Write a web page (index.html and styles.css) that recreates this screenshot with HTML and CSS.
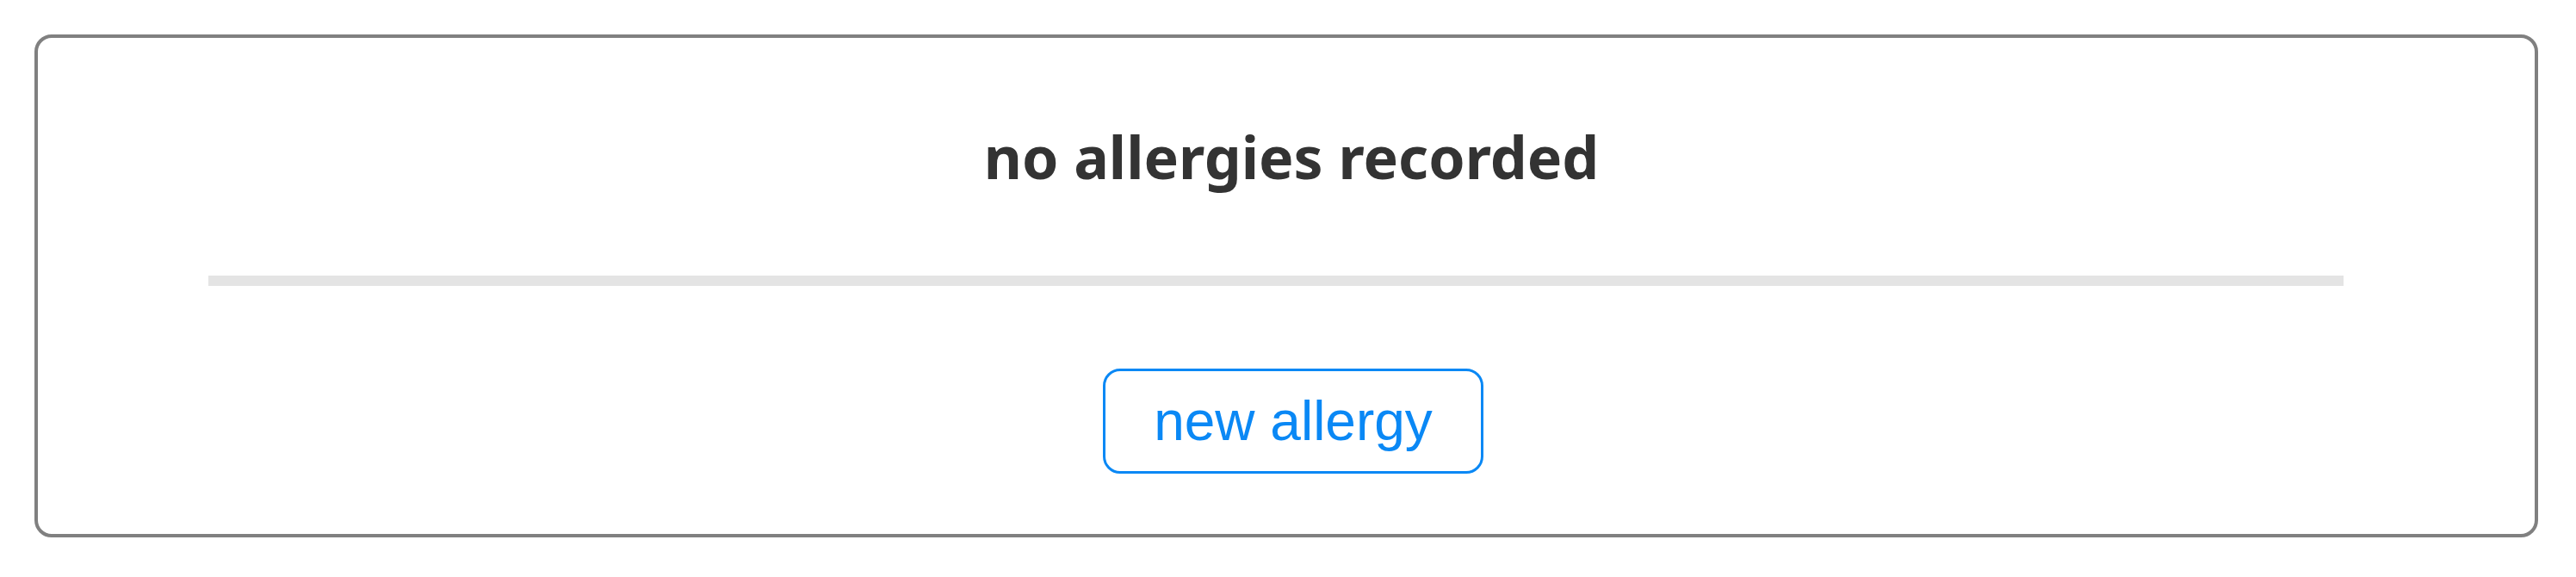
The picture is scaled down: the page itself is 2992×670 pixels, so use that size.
FILE: index.html
```html
<!DOCTYPE html>
<html>
<head>
<meta charset="utf-8">
<link rel="stylesheet" href="styles.css">
</head>
<body>
<div class="card">
  <h1 class="title">no allergies recorded</h1>
  <div class="divider"></div>
  <div class="actions">
    <button class="btn">new allergy</button>
  </div>
</div>
</body>
</html>
```
FILE: styles.css
```css
html, body {
  margin: 0;
  padding: 0;
  background: #ffffff;
}
body {
  padding: 40px 44px 0 40px;
}
.card {
  box-sizing: border-box;
  height: 584px;
  border: 4px solid #808080;
  border-radius: 20px;
  display: flex;
  flex-direction: column;
  align-items: stretch;
}
.title {
  margin: 0;
  padding-top: 100px;
  height: 76px;
  line-height: 76px;
  text-align: center;
  font-family: "Noto Sans", "Open Sans", sans-serif;
  font-weight: 700;
  font-size: 68px;
  color: #333333;
  padding-left: 12px;
}
.divider {
  margin-top: 100px;
  margin-left: 198px;
  width: 2480px;
  height: 12px;
  background: #e4e4e4;
}
.actions {
  margin-top: 96px;
  display: flex;
  justify-content: center;
  padding-left: 16px;
}
.btn {
  box-sizing: border-box;
  width: 442px;
  height: 122px;
  border: 3px solid #0a88f5;
  border-radius: 20px;
  background: #ffffff;
  color: #0a88f5;
  font-family: "Liberation Sans", Arial, sans-serif;
  font-size: 64px;
  padding: 0;
  line-height: 1;
}
```
